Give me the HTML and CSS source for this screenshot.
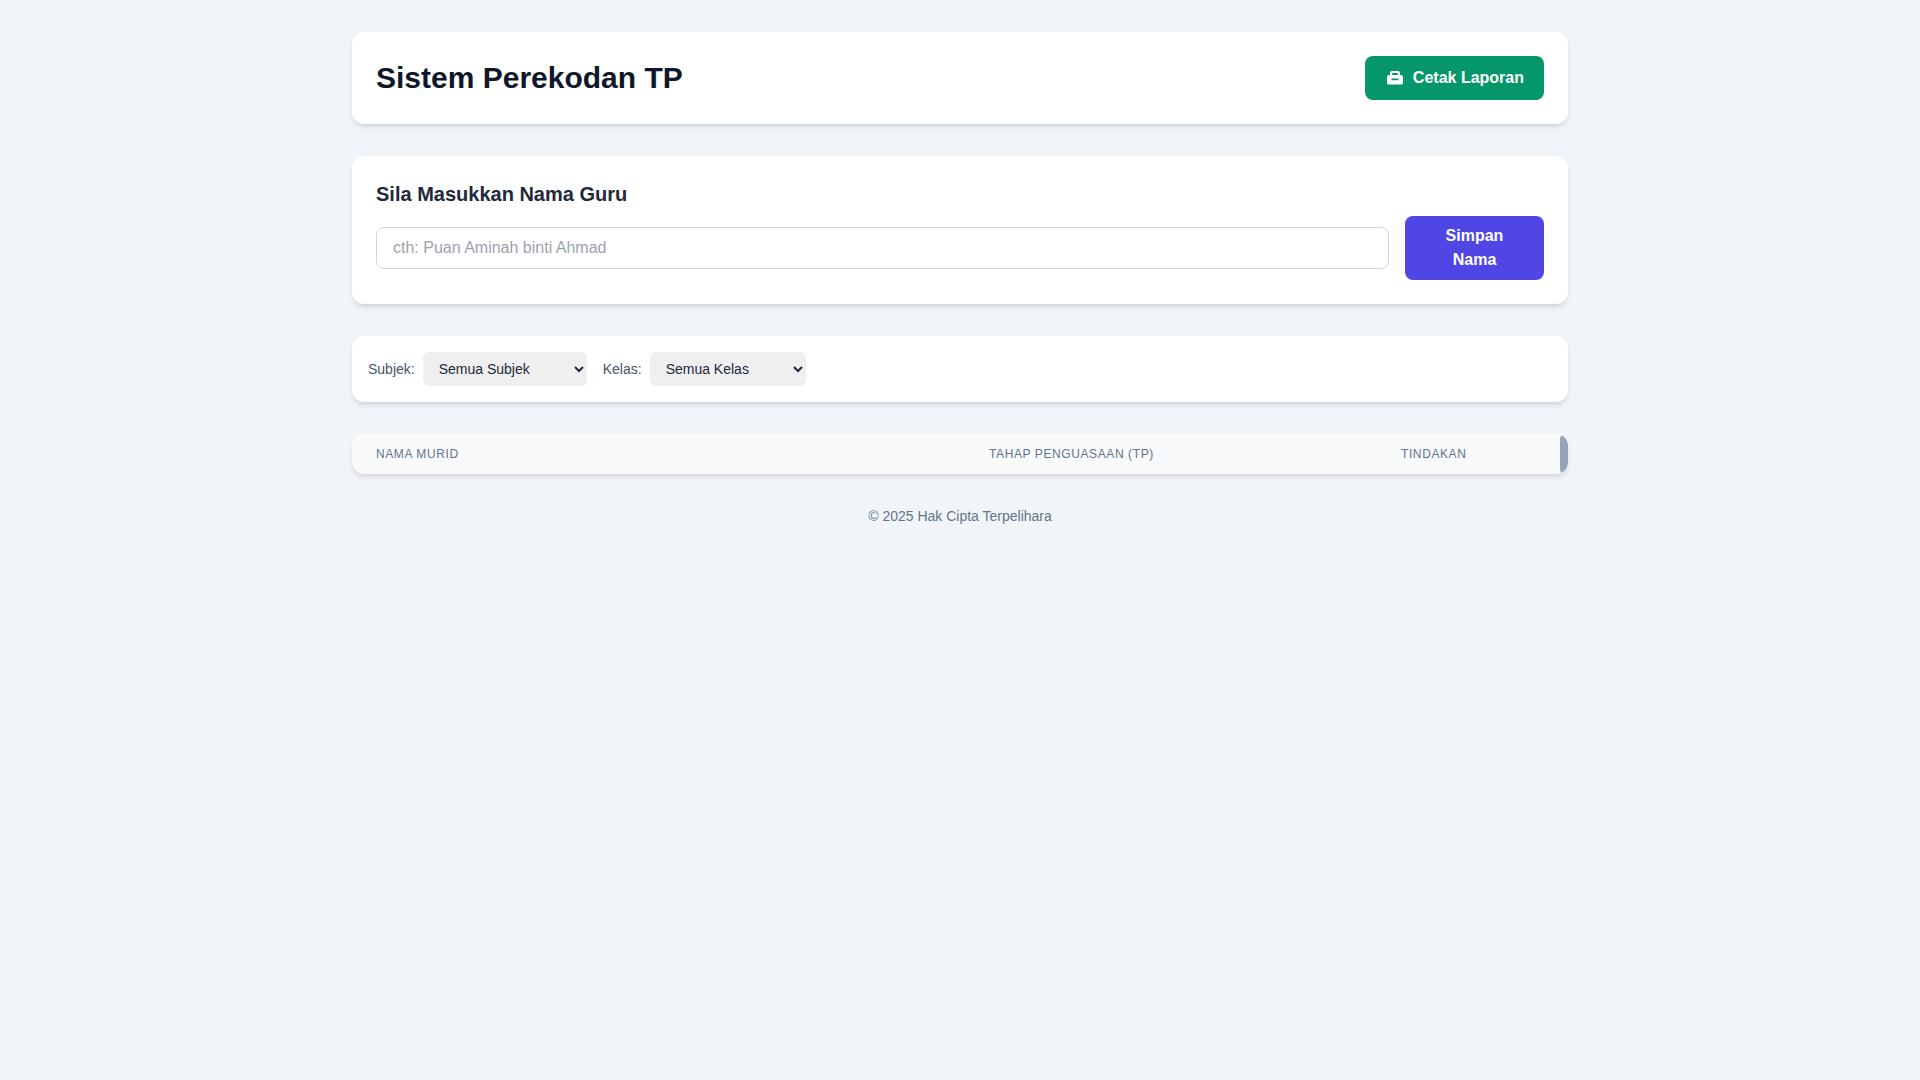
FILE: index.html
```html
<!DOCTYPE html>
<html lang="ms">
<head>
    <meta charset="utf-8">
    <title>Sistem Perekodan TP</title>
    <link rel="stylesheet" href="styles.css">
</head>
<body>
    <div class="container">
        <header class="card header-card">
            <h1>Sistem Perekodan TP</h1>
            <button class="btn btn-print">
                <svg class="icon-print" viewBox="0 0 16 16" aria-hidden="true">
                    <path fill="currentColor" fill-rule="evenodd" d="M5 1h6c1.100 0 2 .9 2 2v2h1c1.100 0 2 .9 2 2v6c0 .8-.7 1.500-1.500 1.500h-13C.7 14.500 0 13.800 0 13V7c0-1.100.9-2 2-2h1V3c0-1.100.9-2 2-2zM5.200 3v2h5.600V3H5.200zM4.500 8.500v1.700h7V8.500h-7z"/>
                </svg>
                Cetak Laporan
            </button>
        </header>

        <section class="card teacher-card">
            <h2>Sila Masukkan Nama Guru</h2>
            <div class="teacher-form">
                <input type="text" class="teacher-input" placeholder="cth: Puan Aminah binti Ahmad">
                <button class="btn btn-save">Simpan Nama</button>
            </div>
        </section>

        <section class="card filter-card">
            <label for="subjek">Subjek:</label>
            <select id="subjek" class="filter-select select-subjek">
                <option>Semua Subjek</option>
            </select>
            <label for="kelas">Kelas:</label>
            <select id="kelas" class="filter-select select-kelas">
                <option>Semua Kelas</option>
            </select>
        </section>

        <div class="card table-wrap">
            <table class="student-table">
                <thead>
                    <tr>
                        <th class="col-name">Nama Murid</th>
                        <th class="col-tp">Tahap Penguasaan (TP)</th>
                        <th class="col-action">Tindakan</th>
                    </tr>
                </thead>
                <tbody></tbody>
            </table>
            <div class="scroll-thumb"></div>
        </div>

        <footer class="footer">&copy; 2025 Hak Cipta Terpelihara</footer>
    </div>
</body>
</html>
```

FILE: styles.css
```css
* {
    box-sizing: border-box;
}

body {
    margin: 0;
    background-color: #f1f5f9;
    font-family: "Liberation Sans", Arial, sans-serif;
    color: #1e293b;
}

.container {
    width: 1216px;
    margin: 0 auto;
    padding-top: 32px;
}

.card {
    background-color: #fff;
    border-radius: 12px;
    box-shadow: 0 4px 6px -1px rgba(0, 0, 0, 0.1), 0 2px 4px -2px rgba(0, 0, 0, 0.1);
    margin-bottom: 32px;
}

.btn {
    border: none;
    border-radius: 8px;
    color: #fff;
    font-family: inherit;
    font-size: 16px;
    font-weight: 700;
    line-height: 24px;
}

.header-card {
    display: flex;
    justify-content: space-between;
    align-items: center;
    padding: 24px;
}

.header-card h1 {
    margin: 0;
    font-size: 30px;
    line-height: 36px;
    font-weight: 700;
    color: #0f172a;
}

.btn-print {
    display: flex;
    align-items: center;
    gap: 10px;
    height: 44px;
    padding: 0 20px 0 22px;
    background-color: #059669;
}

.icon-print {
    width: 16px;
    height: 16px;
}

.teacher-card {
    padding: 24px;
}

.teacher-card h2 {
    margin: 0 0 8px;
    font-size: 20px;
    line-height: 28px;
    font-weight: 700;
    color: #1e293b;
}

.teacher-form {
    display: flex;
    align-items: center;
    gap: 16px;
}

.teacher-input {
    flex: 1;
    height: 42px;
    padding: 8px 16px;
    border: 1px solid #cbd5e1;
    border-radius: 8px;
    font-family: inherit;
    font-size: 16px;
}

.teacher-input::placeholder {
    color: #9ca3af;
}

.btn-save {
    width: 139px;
    padding: 8px 24px;
    background-color: #4f46e5;
}

.filter-card {
    display: flex;
    align-items: center;
    padding: 16px;
    font-size: 14px;
    color: #475569;
}

.filter-card label {
    margin-right: 8px;
}

.filter-select {
    height: 34px;
    padding: 8px 0 8px 12px;
    border: none;
    border-radius: 6px;
    background-color: #efefef;
    font-family: inherit;
    font-size: 14px;
    color: #1e293b;
    margin-right: 16px;
}

.select-subjek {
    width: 164px;
}

.select-kelas {
    width: 156px;
}

.table-wrap {
    display: flex;
    height: 40px;
    overflow: hidden;
    background-color: #f8fafc;
}

.student-table {
    flex: 1;
    border-collapse: collapse;
    table-layout: fixed;
}

.student-table th {
    height: 40px;
    padding: 0 24px;
    font-size: 12px;
    font-weight: 400;
    text-align: left;
    text-transform: uppercase;
    letter-spacing: 0.6px;
    color: #64748b;
}

.col-name {
    width: 613px;
}

.col-tp {
    width: 412px;
}

.scroll-thumb {
    width: 8px;
    margin: 1px 0;
    border-radius: 4px;
    background-color: #94a3b8;
}

.footer {
    text-align: center;
    font-size: 14px;
    line-height: 20px;
    color: #64748b;
}
```
